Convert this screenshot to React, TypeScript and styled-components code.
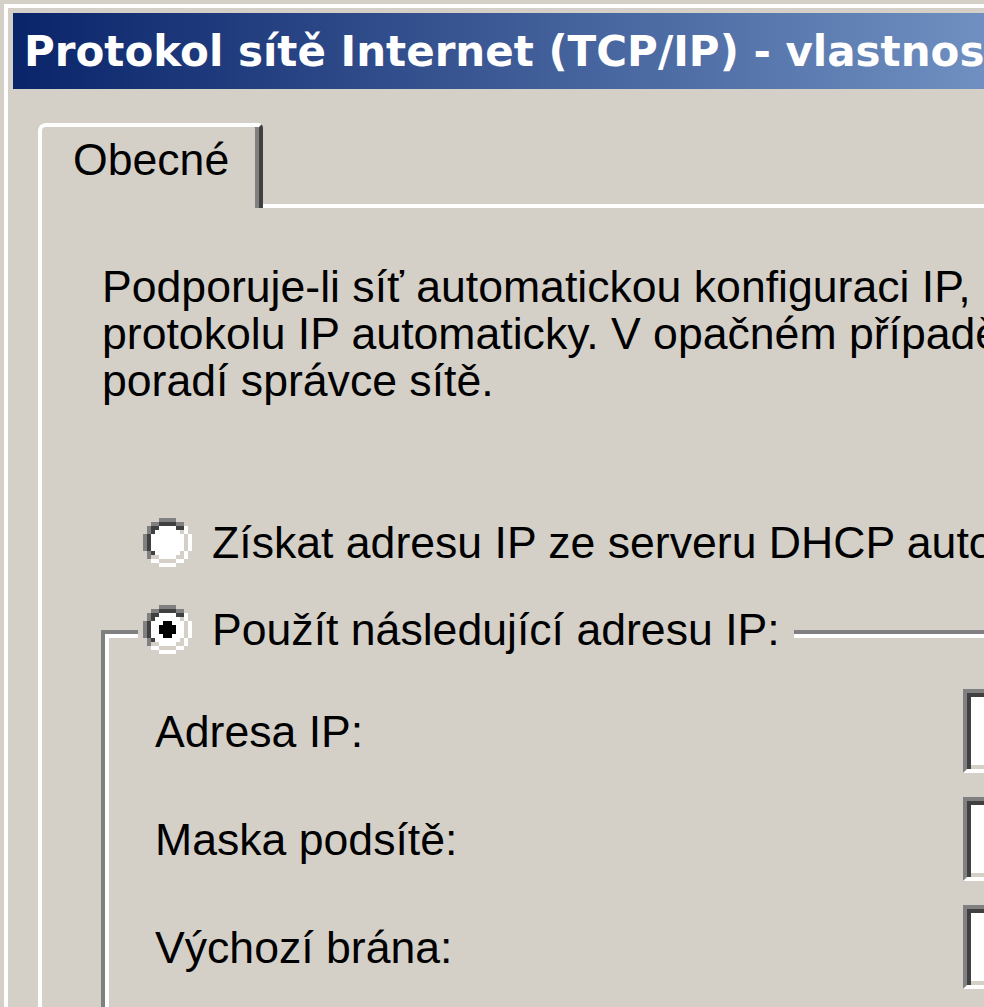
import React from "react";
import styled, { createGlobalStyle } from "styled-components";

// classic win2k palette
const FACE = "#d4d0c8";
const SHADOW = "#808080";
const DARK = "#404040";

const GlobalStyle = createGlobalStyle`
  html, body {
    margin: 0;
    padding: 0;
    background: ${FACE};
    overflow: hidden;
  }
  body {
    font-family: "Liberation Sans", Arial, sans-serif;
    color: #000;
  }
`;

const Window = styled.div`
  margin: 4px 0 0 4px;
  width: 1400px;
  height: 1100px;
  border-top: 4px solid #fff;
  border-left: 4px solid #fff;
  padding: 5px 0 0 5px;
  background: ${FACE};
`;

const TitleBar = styled.div`
  height: 76px;
  display: flex;
  align-items: center;
  padding-left: 11px;
  background: linear-gradient(90deg, #0a246a 0px, #a6caf0 1500px);
  white-space: nowrap;
  overflow: hidden;
`;

const TitleText = styled.span`
  font-family: "DejaVu Sans", Verdana, sans-serif;
  font-weight: bold;
  font-size: 42px;
  color: #fff;
`;

const Body = styled.div`
  padding: 34px 0 0 25px;
`;

const Tab = styled.div`
  position: relative;
  z-index: 1;
  box-sizing: border-box;
  width: 225px;
  height: 85px;
  margin-bottom: -4px;
  padding: 9px 0 0 31px;
  background: ${FACE};
  border-top: 4px solid #fff;
  border-left: 4px solid #fff;
  border-right: 4px solid ${DARK};
  border-radius: 8px 5px 0 0;
  box-shadow: inset -4px 0 0 ${SHADOW};
  font-size: 44.6px;
  line-height: 47px;
`;

const Panel = styled.div`
  height: 900px;
  padding-top: 55px;
  border-top: 4px solid #fff;
  border-left: 4px solid #fff;
`;

const Intro = styled.p`
  margin: 0 0 0 60px;
  font-size: 44.6px;
  line-height: 47px;
  white-space: nowrap;
`;

const OptionRow = styled.div`
  display: flex;
  align-items: center;
  gap: 20px;
  height: 49px;
  margin: 114px 0 0 101px;
`;

const OptionLabel = styled.span`
  font-size: 44.6px;
  line-height: 47px;
  white-space: nowrap;
`;

const GroupBox = styled.div`
  display: flex;
  flex-direction: column;
  width: 1200px;
  height: 500px;
  margin: 63px 0 0 59px;
  border-top: 4px solid ${SHADOW};
  border-left: 4px solid ${SHADOW};
  box-shadow: inset 4px 4px 0 #fff;
`;

const Legend = styled.div`
  align-self: flex-start;
  display: flex;
  align-items: center;
  gap: 20px;
  height: 49px;
  margin: -29px 0 0 33px;
  padding: 0 14px 0 5px;
  background: ${FACE};
`;

const Fields = styled.div`
  display: flex;
  flex-direction: column;
  gap: 24px;
  margin-top: 35px;
`;

const FieldRow = styled.div`
  display: flex;
  align-items: center;
  padding-left: 50px;
`;

const FieldLabel = styled.span`
  flex: none;
  width: 808px;
  font-size: 44.6px;
  line-height: 47px;
  white-space: nowrap;
`;

const IpBox = styled.div`
  flex: none;
  box-sizing: border-box;
  width: 300px;
  height: 84px;
  background: #fff;
  border: 4px solid;
  border-color: ${SHADOW} #fff #fff ${SHADOW};
  box-shadow: inset 4px 4px 0 ${DARK}, inset -4px -4px 0 ${FACE};
`;

// 12x12 classic radio bitmap
const RADIO_MAP = [
  "....SSSS....",
  "..SSDDDDSS..",
  ".SDDIIIIDDW.",
  ".SDIIIIIILW.",
  "SDIIIIIIIILW",
  "SDIIIIIIIILW",
  "SDIIIIIIIILW",
  "SDIIIIIIIILW",
  ".SDIIIIIILW.",
  ".SLLIIIILLW.",
  "..WWLLLLWW..",
  "....WWWW....",
];

const DOT = [
  [4, 5], [4, 6],
  [5, 4], [5, 5], [5, 6], [5, 7],
  [6, 4], [6, 5], [6, 6], [6, 7],
  [7, 5], [7, 6],
];

const PIXEL_COLORS: Record<string, string> = {
  S: SHADOW,
  D: DARK,
  W: "#ffffff",
  I: "#ffffff",
  L: FACE,
};

const RadioIcon = ({ checked }: { checked?: boolean }) => (
  <svg
    width="49"
    height="49"
    viewBox="0 0 12 12"
    shapeRendering="crispEdges"
    style={{ flex: "none", display: "block" }}
  >
    {RADIO_MAP.map((row, y) =>
      row.split("").map((ch, x) =>
        ch === "." ? null : (
          <rect key={`${x}-${y}`} x={x} y={y} width="1" height="1" fill={PIXEL_COLORS[ch]} />
        )
      )
    )}
    {checked &&
      DOT.map(([y, x]) => (
        <rect key={`d${x}-${y}`} x={x} y={y} width="1" height="1" fill="#000" />
      ))}
  </svg>
);

const fields = ["Adresa IP:", "Maska podsítě:", "Výchozí brána:"];

export default function App() {
  return (
    <>
      <GlobalStyle />
      <Window>
        <TitleBar>
          <TitleText>Protokol sítě Internet (TCP/IP) - vlastnosti</TitleText>
        </TitleBar>
        <Body>
          <Tab>Obecné</Tab>
          <Panel>
            <Intro>
              Podporuje-li síť automatickou konfiguraci IP, můžete získat nastavení
              <br />
              protokolu IP automaticky. V opačném případě vám správné nastavení protokolu IP
              <br />
              poradí správce sítě.
            </Intro>

            <OptionRow>
              <RadioIcon />
              <OptionLabel>Získat adresu IP ze serveru DHCP automaticky</OptionLabel>
            </OptionRow>

            <GroupBox>
              <Legend>
                <RadioIcon checked />
                <OptionLabel>Použít následující adresu IP:</OptionLabel>
              </Legend>
              <Fields>
                {fields.map((label) => (
                  <FieldRow key={label}>
                    <FieldLabel>{label}</FieldLabel>
                    <IpBox />
                  </FieldRow>
                ))}
              </Fields>
            </GroupBox>
          </Panel>
        </Body>
      </Window>
    </>
  );
}
